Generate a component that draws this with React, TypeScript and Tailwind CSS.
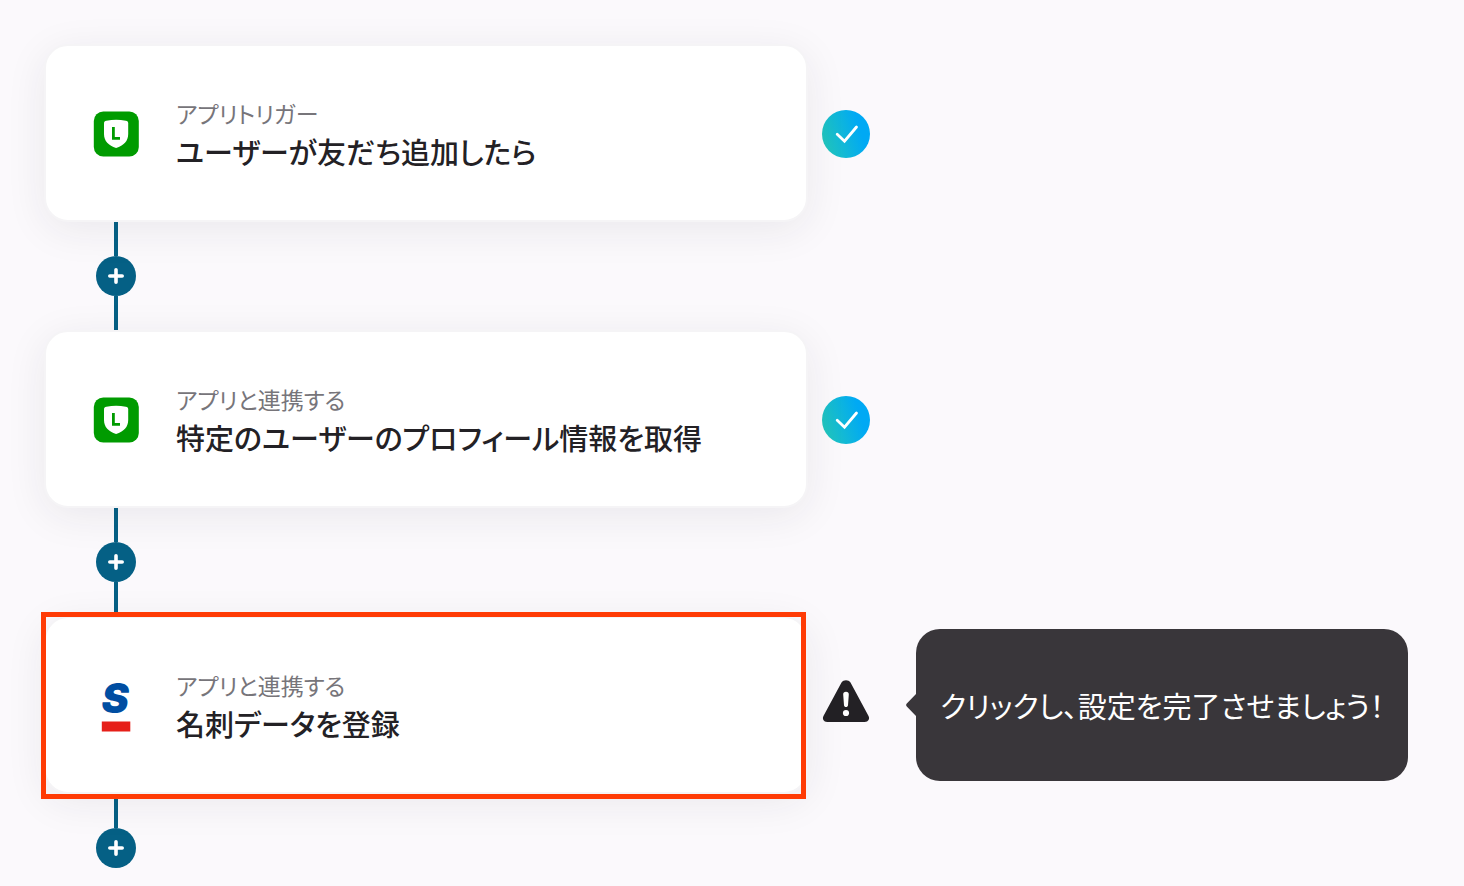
import React from "react";

type Status = "done" | "warning";

interface Step {
  label: string;
  title: string;
  icon: React.ReactNode;
  status: Status;
  hint?: string;
  highlighted?: boolean;
}

function LineIcon() {
  return (
    <svg viewBox="0 0 46 46" className="size-[46px]" aria-hidden="true">
      <rect x="0.8" y="0.5" width="45" height="45" rx="9.5" fill="#009b00" />
      <path
        d="M11 12.2c0-1.600.8-2.200 2.400-2.500 3.300-.6 6.600-.9 9.700-.9s6.400.3 9.700.9c1.600.3 2.400.9 2.400 2.500v10.800c0 7.200-4.500 11.300-12.100 14.100-7.600-2.800-12.100-6.900-12.100-14.100z"
        fill="#fff"
      />
      <path d="M20.400 16v11.300h6.600" fill="none" stroke="#009b00" strokeWidth="2.800" />
    </svg>
  );
}

function SansanIcon() {
  return (
    <svg viewBox="0 0 46 54" className="h-[54px] w-[46px] overflow-visible" aria-hidden="true">
      <text
        x="8.5"
        y="34"
        fill="#004ea2"
        fontFamily="Inter, 'Noto Sans', sans-serif"
        fontSize="41"
        fontWeight="900"
        fontStyle="italic"
      >
        S
      </text>
      <rect x="8.800" y="42.500" width="28.500" height="10" fill="#e61f19" />
    </svg>
  );
}

function DoneIcon() {
  return (
    <svg viewBox="0 0 48 48" className="size-12" role="img" aria-label="完了">
      <defs>
        <linearGradient id="done-fill" x1="0" y1="0.65" x2="1" y2="0.35">
          <stop offset="0" stopColor="#22c6bc" />
          <stop offset="0.8" stopColor="#00a9f4" />
        </linearGradient>
      </defs>
      <circle cx="24" cy="24" r="24" fill="url(#done-fill)" />
      <path
        d="M15.200 24.200l7.300 7 12-14.200"
        fill="none"
        stroke="#fff"
        strokeWidth="2.800"
        strokeLinecap="round"
        strokeLinejoin="miter"
      />
    </svg>
  );
}

function WarningIcon() {
  return (
    <svg viewBox="0 0 48 48" className="size-12 overflow-visible" role="img" aria-label="未設定">
      <path
        d="M19.500.6c2-3.200 7-3.200 9 0l17.900 33.200c1.800 3.200-.2 6.200-3.600 6.200H5.200c-3.400 0-5.400-3-3.600-6.200z"
        fill="#232125"
      />
      <path d="M24 9.800c1.800 0 2.900 1 2.800 2.700l-.8 10.800c-.1 1.200-.9 1.800-2 1.800s-1.900-.6-2-1.800l-.8-10.800c-.1-1.700 1-2.700 2.800-2.700z" fill="#fff" />
      <circle cx="24" cy="31" r="3.100" fill="#fff" />
    </svg>
  );
}

function AddStep({ last = false }: { last?: boolean }) {
  return (
    <div className="flex w-[144px] flex-col items-center">
      <span className="h-[34px] w-1 bg-[#056085]" />
      <button
        type="button"
        aria-label="ステップを追加"
        className="flex size-10 items-center justify-center rounded-full bg-[#056085]"
      >
        <svg viewBox="0 0 16 16" className="size-4" aria-hidden="true">
          <path d="M8 1.800v12.400M1.800 8h12.400" stroke="#fff" strokeWidth="3.600" strokeLinecap="round" />
        </svg>
      </button>
      {!last && <span className="h-[34px] w-1 bg-[#056085]" />}
    </div>
  );
}

function StepRow({ step }: { step: Step }) {
  return (
    <div className="flex items-center">
      <div className="relative w-full max-w-[764px]">
        <button
          type="button"
          className="flex h-[178px] w-full items-center rounded-3xl border-2 border-[#f5f4f6] bg-white pt-0.5 pl-[47px] text-left shadow-[0_8px_40px_rgba(40,35,45,0.08)]"
        >
          <span className="flex w-[46px] shrink-0 justify-center">{step.icon}</span>
          <span className="ml-[37px] flex flex-col pt-0.5">
            <span className="text-[23px] leading-8 text-[#77757a]">{step.label}</span>
            <span className="text-[29px] leading-[44px] font-medium text-[#232125]">{step.title}</span>
          </span>
        </button>
        {step.highlighted && (
          <span className="pointer-events-none absolute -top-1 right-0.5 -bottom-[5px] -left-[3px] border-[5px] border-[#ff3b05]" />
        )}
      </div>
      <span className="ml-[14px] shrink-0 pt-0.5">
        {step.status === "done" ? <DoneIcon /> : <WarningIcon />}
      </span>
      {step.hint && (
        <div className="ml-9 flex shrink-0 items-center">
          <svg viewBox="0 0 10 24" className="h-6 w-[10px]" aria-hidden="true">
            <path d="M10 1L.8 10.400c-.9.900-.9 2.300 0 3.200L10 23z" fill="#39363a" />
          </svg>
          <div
            role="tooltip"
            className="flex h-[152px] items-center rounded-3xl bg-[#39363a] px-6 text-[29px] leading-10 text-white"
          >
            {step.hint}
          </div>
        </div>
      )}
    </div>
  );
}

const steps: Step[] = [
  {
    label: "アプリトリガー",
    title: "ユーザーが友だち追加したら",
    icon: <LineIcon />,
    status: "done",
  },
  {
    label: "アプリと連携する",
    title: "特定のユーザーのプロフィール情報を取得",
    icon: <LineIcon />,
    status: "done",
  },
  {
    label: "アプリと連携する",
    title: "名刺データを登録",
    icon: <SansanIcon />,
    status: "warning",
    hint: "クリックし、設定を完了させましょう！",
    highlighted: true,
  },
];

export default function App() {
  return (
    <main
      lang="ja"
      className="min-h-screen bg-[#fbf9fc] px-11 pt-11 pb-[18px] font-['Noto_Sans_CJK_JP',sans-serif] [font-feature-settings:'palt']"
    >
      <ol>
        {steps.map((step, index) => (
          <li key={step.title}>
            <StepRow step={step} />
            <AddStep last={index === steps.length - 1} />
          </li>
        ))}
      </ol>
    </main>
  );
}
